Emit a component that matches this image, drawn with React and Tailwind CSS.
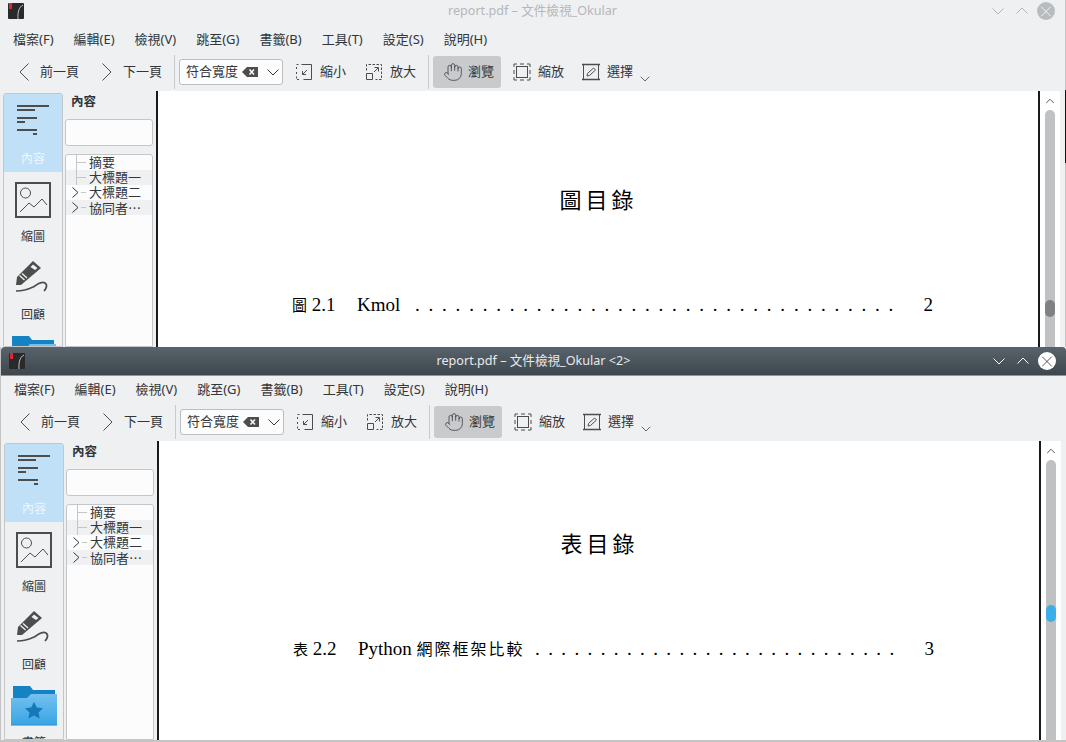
import { ChevronDown, ChevronUp, Hand, X } from "lucide-react";

const uiFont = { fontFamily: '"Noto Sans", "Noto Sans CJK TC", sans-serif' };

const menus = ["檔案(F)", "編輯(E)", "檢視(V)", "跳至(G)", "書籤(B)", "工具(T)", "設定(S)", "說明(H)"];

function AppIcon() {
    return (
        <svg width="16" height="16" viewBox="0 0 16 16">
            <rect width="16" height="16" rx="1" fill="#2a2a2a" />
            <rect x="1" y="0" width="3" height="6" fill="#da2a35" />
            <path d="M15 2 C11 4 9.500 9 10 16" fill="none" stroke="#c4c4c4" strokeWidth="1" />
        </svg>
    );
}

function PageChevron({ flip }) {
    return (
        <svg width="10" height="18" viewBox="0 0 10 18" fill="none" stroke="#4d4d4d">
            <path d={flip ? "M0.500 0.500L9 9L0.500 17.500" : "M9.500 0.500L1 9L9.500 17.500"} />
        </svg>
    );
}

function TitleChevron({ up, color }) {
    return (
        <svg width="12" height="7" viewBox="0 0 12 7" fill="none" stroke={color}>
            <path d={up ? "M0.500 6.500L6 1L11.500 6.500" : "M0.500 0.500L6 6L11.500 0.500"} />
        </svg>
    );
}

function ZoomOutIcon() {
    return (
        <svg width="18" height="18" viewBox="0 0 18 18" fill="none" stroke="#4d4d4d">
            <path d="M6.500 1.500H16.500V16.500H8.500" />
            <path d="M1.500 1.500H3.500M1.500 4V6.500M1.500 9V11M1.500 13.500V16.500H5.500" strokeDasharray="2 1.500" />
            <path d="M7.500 11.500L12 7M7.500 8V11.500H11" />
        </svg>
    );
}

function ZoomInIcon() {
    return (
        <svg width="18" height="18" viewBox="0 0 18 18" fill="none" stroke="#4d4d4d">
            <path d="M1.500 10.500H7.500V16.500H1.500Z" />
            <path d="M1.500 7.500V1.500H16.500V16.500H10.500" strokeDasharray="2.500 1.500" />
            <path d="M9 9L13 5M9.500 4.500H13.500V8.500" />
        </svg>
    );
}

function FitIcon() {
    return (
        <svg width="18" height="18" viewBox="0 0 18 18" fill="none" stroke="#4d4d4d">
            <rect x="3.500" y="3.500" width="11" height="11" />
            <path d="M1 4V1H4M7 1H11M14 1H17V4M17 7V11M17 14V17H14M11 17H7M4 17H1V14M1 11V7" />
        </svg>
    );
}

function SelectIcon() {
    return (
        <svg width="18" height="18" viewBox="0 0 18 18" fill="none" stroke="#4d4d4d">
            <rect x="1.500" y="1.500" width="15" height="15" />
            <path d="M0 1.500H18M0 16.500H18" strokeWidth="1.500" />
            <path d="M5 13L5.500 10.500L11.500 5L13.500 7L7.500 12.500Z" fill="none" />
        </svg>
    );
}

function ContentsIcon() {
    return (
        <svg width="32" height="34" viewBox="0 0 32 34" stroke="#4d4d4d" strokeWidth="2">
            <path d="M0 1H32M0 5H18M0 13H20M0 17H8M0 25H20M16 29H20" />
        </svg>
    );
}

function ThumbIcon() {
    return (
        <svg width="36" height="36" viewBox="0 0 36 36" fill="none" stroke="#4d4d4d">
            <rect x="1" y="1" width="34" height="34" strokeWidth="2" />
            <circle cx="10.500" cy="11" r="5" />
            <path d="M5 30L14 21L19 25L27 17L32 23" />
        </svg>
    );
}

function ReviewIcon() {
    return (
        <svg width="36" height="36" viewBox="0 0 36 36">
            <path d="M18 1L26 8L6 25L1 25L2 17Z" fill="#4d4d4d" />
            <path d="M18 4.500L22.500 8L20 10L15.500 7Z" fill="#eff0f1" />
            <path d="M4.500 15.500L9.500 20M7 13.500L12 18" stroke="#eff0f1" strokeWidth="1.300" />
            <path d="M1 31C8 31 14 29 18 27C23 24 27 21 30 23C33 25 31 29 29 31" fill="none" stroke="#4d4d4d" strokeWidth="1.700" />
        </svg>
    );
}

function FolderIcon() {
    return (
        <svg width="46" height="40" viewBox="0 0 46 40">
            <defs>
                <linearGradient id="folderGrad" x1="0" y1="0" x2="0" y2="1">
                    <stop offset="0" stopColor="#74c1ef" />
                    <stop offset="1" stopColor="#39a4e4" />
                </linearGradient>
            </defs>
            <path d="M2 0H19L22 4H44V12H2Z" fill="#1582c4" />
            <path d="M0 12L16 12L20 8H46V39H0Z" fill="url(#folderGrad)" />
            <rect y="38.500" width="46" height="1" fill="#2a8cc8" />
            <path d="M23 16L25.800 21.600L32 22.300L27.500 26.500L28.700 32.500L23 29.500L17.300 32.500L18.500 26.500L14 22.300L20.200 21.600Z" fill="#1578b8" />
        </svg>
    );
}

function SideItem({ icon, label, active }) {
    return (
        <div className={`h-[78px] shrink-0 flex flex-col items-center pt-[8px] ${active ? "bg-[#bfe0f6]" : ""}`}>
            <div className="h-[40px] flex items-center justify-center">{icon}</div>
            <div className={`mt-[9px] text-[12px] leading-4 ${active ? "text-[#eef6fc]" : "text-[#31363b]"}`}>{label}</div>
        </div>
    );
}

function TreeRow({ label, alt, expandable, line }) {
    return (
        <div className={`h-[15px] relative text-[13px] leading-[15px] text-[#31363b] pl-[23px] ${alt ? "bg-[#eff0f1]" : ""}`}>
            {line && <div className="absolute left-[10px] top-0 w-px h-[15px] bg-[#c4c6c8]" />}
            <div className={`absolute top-[7px] h-px bg-[#c4c6c8] ${expandable ? "left-[15px] w-[5px]" : "left-[10px] w-[10px]"}`} />
            {expandable && (
                <svg className="absolute left-[6px] top-[2px]" width="7" height="11" viewBox="0 0 7 11" fill="none" stroke="#31363b">
                    <path d="M0.500 0.500L6 5.500L0.500 10.500" />
                </svg>
            )}
            {label}
        </div>
    );
}

function ToolButton({ icon, label, className }) {
    return (
        <div className={`flex items-center text-[13px] text-[#31363b] ${className}`}>
            {icon}
            <span>{label}</span>
        </div>
    );
}

function Dots({ count }) {
    return (
        <div className="flex-1 flex justify-between">
            {Array.from({ length: count }, (_, i) => (
                <span key={i}>.</span>
            ))}
        </div>
    );
}

function Window({ active, title, className, doc, thumbClass }) {
    const ctl = active ? "#ffffff" : "#b4b7ba";
    return (
        <div className={`absolute w-[1065px] overflow-hidden bg-[#eff0f1] flex flex-col ${className}`} style={uiFont}>
            {/* title bar */}
            <div
                className={`h-[29px] shrink-0 relative flex items-center justify-center text-[12.600px] border-b ${
                    active
                        ? "bg-gradient-to-b from-[#59636b] to-[#3e474e] border-[#3daee9] text-[#e8eaec] rounded-t-[4px]"
                        : "bg-[#eff0f1] border-[#eff0f1] text-[#b4b7ba]"
                }`}
            >
                <div className="absolute left-[8px] top-[6px]"><AppIcon /></div>
                <span>{title}</span>
                <div className="absolute left-[992px] top-[11px] flex">
                    <TitleChevron color={ctl} />
                </div>
                <div className="absolute left-[1016px] top-[10px] flex">
                    <TitleChevron up color={ctl} />
                </div>
                <div className={`absolute left-[1037px] top-[5px] w-[18px] h-[18px] rounded-full flex items-center justify-center ${active ? "bg-white text-[#31363b]" : "bg-[#b9bcbf] text-white"}`}>
                    <X size={19} strokeWidth={1.100} />
                </div>
            </div>

            {/* menu */}
            <div className="h-[29px] pb-[2px] shrink-0 flex items-center pl-[13px] gap-[20px] text-[13px] text-[#31363b]">
                {menus.map((m) => (
                    <span key={m}>{m}</span>
                ))}
            </div>

            {/* toolbar */}
            <div className="h-[36px] pb-[2px] shrink-0 flex items-center pl-[19px]">
                <ToolButton icon={<PageChevron />} label="前一頁" className="w-[83px] gap-[11px]" />
                <ToolButton icon={<PageChevron flip />} label="下一頁" className="w-[72px] gap-[11px]" />
                <div className="w-px h-[34px] bg-[#c9cbcd]" />
                <div className="ml-[4px] w-[104px] h-[26px] bg-[#fcfcfc] border border-[#bcbebf] rounded-[3px] flex items-center pl-[6px] text-[13px] text-[#31363b] relative">
                    符合寬度
                    <svg className="absolute left-[62px] top-[6px]" width="16" height="12" viewBox="0 0 16 12">
                        <path d="M0 6L5 1H16V11H5Z" fill="#4d4d4d" />
                        <path d="M7.500 3.500L12 8.500M12 3.500L7.500 8.500" stroke="#fcfcfc" strokeWidth="1.500" />
                    </svg>
                    <div className="absolute left-[87px] top-[9px] flex">
                        <TitleChevron color="#31363b" />
                    </div>
                </div>
                <ToolButton icon={<ZoomOutIcon />} label="縮小" className="ml-[12px] w-[70px] gap-[7px]" />
                <ToolButton icon={<ZoomInIcon />} label="放大" className="w-[63px] gap-[7px]" />
                <div className="w-px h-[34px] bg-[#c9cbcd]" />
                <ToolButton
                    icon={<Hand size={20} strokeWidth={0.900} />}
                    label="瀏覽"
                    className="ml-[4px] w-[68px] h-[32px] bg-[#c8cacc] rounded-[3px] pl-[10px] gap-[5px]"
                />
                <ToolButton icon={<FitIcon />} label="縮放" className="ml-[12px] w-[69px] gap-[7px]" />
                <ToolButton icon={<SelectIcon />} label="選擇" className="w-[55px] gap-[7px]" />
                <ChevronDown size={16} strokeWidth={1.100} className="mt-[14px] text-[#31363b]" />
            </div>

            {/* content */}
            <div className="flex-1 min-h-0 flex pl-[3px]">
                <div className="w-[60px] shrink-0 mt-[2px] border border-[#c4c6c8] rounded-t-[3px] overflow-hidden flex flex-col">
                    <SideItem active icon={<ContentsIcon />} label="內容" />
                    <SideItem icon={<ThumbIcon />} label="縮圖" />
                    <SideItem icon={<ReviewIcon />} label="回顧" />
                    <SideItem icon={<FolderIcon />} label="書籤" />
                </div>
                <div className="w-[88px] shrink-0 ml-[2px] flex flex-col">
                    <div className="h-[28px] shrink-0 pl-[6px] pt-[2px] text-[12.500px] font-bold text-[#31363b]">內容</div>
                    <div className="h-[27px] shrink-0 bg-[#fcfcfc] border border-[#c4c6c8] rounded-[3px]" />
                    <div className="flex-1 mt-[8px] bg-[#fcfcfc] border border-[#c4c6c8] rounded-t-[3px]">
                        <TreeRow label="摘要" line />
                        <TreeRow label="大標題一" alt line />
                        <TreeRow label="大標題二" expandable />
                        <TreeRow label={<>協同者<span className="font-['Noto_Sans_CJK_TC']">…</span></>} alt expandable />
                    </div>
                </div>
                <div className="w-[884px] ml-[3px] shrink-0 bg-white border-x-2 border-[#1a1a1a] text-black" style={{ fontFamily: '"Liberation Serif", "Noto Sans CJK TC", serif' }}>
                    {doc}
                </div>
                <div className="w-[20px] shrink-0 bg-white flex flex-col items-center">
                    <ChevronUp size={14} strokeWidth={1.400} className="mt-[3px] text-[#31363b]" />
                    <div className="relative mt-[2px] w-[10px] flex-1 bg-[#bfc1c3] rounded-t-full">
                        <div className={`absolute left-0 w-[10px] h-[17px] rounded-full ${thumbClass}`} />
                    </div>
                </div>
            </div>
        </div>
    );
}

export default function App() {
    return (
        <div className="relative w-[1066px] h-[742px] overflow-hidden bg-[#c4c4c4]">
            <div className="absolute left-[1065px] top-[90px] w-px h-[73px] bg-[#111]" />
            <Window
                title="report.pdf – 文件檢視_Okular"
                className="left-0 top-[-3px] h-[350px]"
                thumbClass="top-[190px] bg-[#7f8183]"
                doc={
                    <div className="pt-[93px]">
                        <div className="text-[22px] leading-[34px] tracking-[4px] text-center ml-[1px]">圖目錄</div>
                        <div className="mt-[75px] pl-[134px] pr-[105px] flex text-[19px] leading-[24px]">
                            <span className="w-[65px] shrink-0"><span className="text-[15px]">圖</span> 2.1</span>
                            <span className="w-[58px] shrink-0">Kmol</span>
                            <Dots count={36} />
                            <span className="ml-[30px]">2</span>
                        </div>
                    </div>
                }
            />
            <Window
                active
                title="report.pdf – 文件檢視_Okular <2>"
                className="left-[1px] top-[347px] h-[393px]"
                thumbClass="top-[145px] bg-[#3daee9]"
                doc={
                    <div className="pt-[87px]">
                        <div className="text-[22px] leading-[34px] tracking-[4px] text-center ml-[1px]">表目錄</div>
                        <div className="mt-[75px] pl-[134px] pr-[105px] flex text-[19px] leading-[24px]">
                            <span className="w-[65px] shrink-0"><span className="text-[15px]">表</span> 2.2</span>
                            <span className="w-[177px] shrink-0">Python <span className="text-[16px] tracking-[2px]">網際框架比較</span></span>
                            <Dots count={28} />
                            <span className="ml-[30px]">3</span>
                        </div>
                    </div>
                }
            />
        </div>
    );
}
